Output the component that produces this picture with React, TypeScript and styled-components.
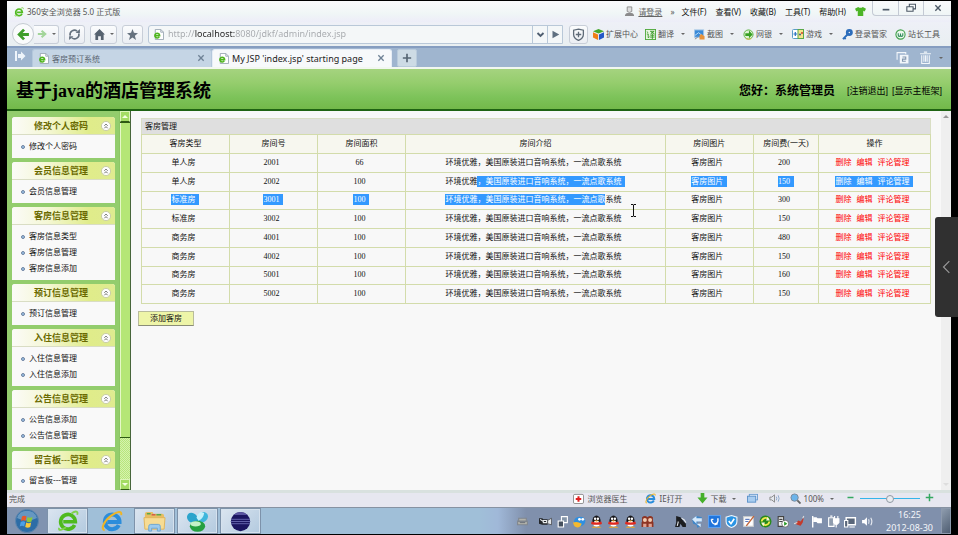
import React from "react";
import styled, { createGlobalStyle, css } from "styled-components";

const ui = `"Noto Sans", "Noto Sans CJK SC", sans-serif`;
const song = `"Liberation Serif", "Noto Sans CJK SC", serif`;

const GlobalStyle = createGlobalStyle`
  * { box-sizing: border-box; }
  body { margin: 0; background: #000; overflow: hidden; }
  button, input { font: inherit; color: inherit; }
  button { padding: 0; border: 0; background: none; }
  a { color: inherit; text-decoration: none; }
  svg { flex: none; }
`;

const Screen = styled.div`
  position: relative;
  display: flex;
  flex-direction: column;
  height: 100vh;
  padding: 1px 7px;
  background: #000;
  font: 8px/12px ${ui};
  white-space: nowrap;
`;

/* ---------- browser chrome ---------- */

const TitleBar = styled.header`
  display: flex;
  align-items: center;
  height: 21px;
  padding-left: 7px;
  background: linear-gradient(#fafafc, #f0f6f6 60%, #ededf8);
  color: #555;
`;
const AppName = styled.span`
  margin-left: 3px;
`;
const Spacer = styled.div`
  flex: 1;
`;
const Login = styled.a`
  margin: 0 8px 0 3px;
  text-decoration: underline;
  color: #666;
`;
const Menu = styled.nav`
  display: flex;
  gap: 9px;
  margin: 0 9px 0 7px;
  color: #111;
`;
const WindowControls = styled.div`
  display: flex;
  align-self: flex-start;
  height: 15px;
  margin-left: 6px;
  border-left: 1px solid #c4cad4;
  border-bottom: 1px solid #c4cad4;
  border-radius: 0 0 0 4px;
`;
const WindowButton = styled.button`
  display: grid;
  place-items: center;
  width: 25px;
  & + & { border-left: 1px solid #c4cad4; }
  &:last-child { width: 28px; }
`;

const Toolbar = styled.div`
  display: flex;
  align-items: center;
  height: 24px;
  padding: 0 11px 0 5px;
  background: linear-gradient(#eef0f7, #e9eff1);
  color: #555;
`;
const BackButton = styled.button`
  display: grid;
  place-items: center;
  width: 22px;
  height: 22px;
  border: 1px solid #c5cbd2;
  border-radius: 50%;
  background: #fafbfc;
`;
const ToolButton = styled.button<{ $width: number; $joined?: boolean }>`
  display: flex;
  align-items: center;
  justify-content: center;
  gap: 5px;
  width: ${(p) => p.$width}px;
  height: 19px;
  margin-right: 5px;
  border: 1px solid #c8ced8;
  border-radius: 3px;
  background: linear-gradient(#fbfcfd, #ebeef3);
  ${(p) => p.$joined && css`border-left: 0; border-radius: 0 3px 3px 0;`}
`;
const AddressBar = styled.div`
  display: flex;
  flex: 1;
  align-items: center;
  height: 19px;
  margin-right: 6px;
  padding-left: 4px;
  border: 1px solid #b9c8d8;
  border-radius: 3px 0 0 3px;
  background: #f4f7f8;
`;
const UrlInput = styled.input`
  flex: 1;
  min-width: 0;
  height: 17px;
  padding: 0 0 1px 4px;
  border: 0;
  outline: 0;
  font-size: 9px;
  color: transparent;
  background: linear-gradient(90deg, #a5a8ac 31px, #222 31px, #222 71px, #a5a8ac 71px);
  background-clip: text;
  -webkit-background-clip: text;
`;
const AddressButton = styled.button`
  display: grid;
  place-items: center;
  width: 15px;
  height: 17px;
  border-left: 1px solid #b9c8d8;
`;
const Extension = styled.button<{ $end?: number }>`
  display: flex;
  align-items: center;
  gap: 2px;
  margin-right: ${(p) => p.$end ?? 9}px;
  white-space: nowrap;
`;
const Caret = styled.i<{ $gap?: number }>`
  margin-left: ${(p) => p.$gap ?? 5}px;
  border: 2px solid transparent;
  border-top-color: #666;
  border-bottom: 0;
`;

const TabStrip = styled.div`
  display: flex;
  align-items: flex-end;
  height: 21px;
  padding-right: 8px;
  border-top: 2px solid #859dc0;
  background: #9fb5cf;
  color: #333;
`;
const TabLead = styled.button`
  align-self: center;
  width: 25px;
`;
const Tab = styled.div<{ $active?: boolean }>`
  display: flex;
  align-items: center;
  width: 180px;
  height: 18px;
  padding: 0 6px 0 5px;
  border: 1px solid ${(p) => (p.$active ? "#e6edf6" : "#b4c8dc")};
  border-bottom: 0;
  border-radius: 3px 3px 0 0;
  background: ${(p) => (p.$active ? "#f7f9fb" : "#c5d5e5")};
  font-size: ${(p) => (p.$active ? 9 : 8)}px;
  color: ${(p) => (p.$active ? "#222" : "#5a6470")};
`;
const TabTitle = styled.button`
  display: flex;
  flex: 1;
  align-items: center;
  gap: 3px;
`;
const NewTab = styled.button`
  display: grid;
  place-items: center;
  width: 20px;
  height: 18px;
  margin-left: 5px;
  border: 1px solid #b9cbdc;
  border-radius: 2px;
  background: #cddbe5;
`;
const TabTools = styled.div`
  display: flex;
  align-self: center;
`;

/* ---------- page ---------- */

const Banner = styled.header`
  display: flex;
  align-items: center;
  height: 44px;
  padding: 3px 9px 0;
  border-top: 2px solid #f2f7f0;
  border-bottom: 2px solid #1f6413;
  background: linear-gradient(#a5d37f, #95cd6d 35%, #7dc35a 70%, #73b94a);
  color: #000;
`;
const SiteTitle = styled.h1`
  flex: 1;
  margin: 0;
  font: bold 18px/24px ${song};
`;
const Greeting = styled.strong`
  margin-right: 12px;
  font: bold 12px/16px ${song};
`;
const BannerLinks = styled.nav`
  display: flex;
  gap: 4px;
  font-family: "Liberation Sans", "Noto Sans CJK SC", sans-serif;
  font-size: 9px;
`;

const Page = styled.div`
  display: flex;
  flex: 1;
  min-height: 0;
  background: #f8f8f8;
  font-family: ${song};
  color: #111;
`;
const Sidebar = styled.aside`
  display: flex;
  flex-direction: column;
  gap: 4px;
  width: 112px;
  overflow: hidden;
  padding: 6px 4px 0 5px;
  background: #93cd6d;
`;
const Panel = styled.section`
  flex: none;
  border-radius: 3px 3px 0 0;
  background: #f9f9f9;
`;
const PanelHeader = styled.h2`
  display: flex;
  align-items: center;
  height: 18px;
  margin: 0;
  padding: 0 4px 0 22px;
  border-bottom: 1px solid #d9ddc4;
  border-radius: 3px 3px 0 0;
  background: linear-gradient(90deg, #fbfbf8, #f4f7d4 35%, #e0ec8a 75%, #dfeb90);
  font: bold 9px/16px ${song};
  color: #6a6a00;
`;
const Collapse = styled.button`
  display: flex;
  margin-left: auto;
`;
const PanelList = styled.ul`
  margin: 0;
  padding: 4px 0 3px 9px;
  list-style: none;
`;
const PanelItem = styled.li`
  display: flex;
  align-items: center;
  gap: 4px;
  height: 16px;
  &::before {
    content: "";
    width: 2px;
    height: 2px;
    border: 1px solid #6f82a0;
    border-radius: 2px;
    background: #9cc3ea;
  }
`;
const SideScroll = styled.div`
  display: flex;
  flex-direction: column;
  width: 12px;
  border-left: 1px solid #8cc665;
  border-right: 1px solid #47653a;
  background: repeating-conic-gradient(#b8e67c 0 25%, #d6f2ae 0 50%) 0 0 / 2px 2px;
`;
const SideArrow = styled.button`
  display: grid;
  place-items: center;
  height: 11px;
  border: 1px solid #dcf5b8;
  border-bottom-color: #2f5a14;
  background: #a4dc64;
`;
const SideThumb = styled.div`
  flex: 314;
  border: 1px solid #2f5a14;
  border-width: 1px 0;
  background: #b5e676;
  box-shadow: inset 1px 0 #e6f8c8;
`;
const SideTrack = styled.div`
  flex: 41;
`;

const Main = styled.main`
  flex: 1;
  min-width: 0;
  padding: 7px 10px 0;
`;
const RoomTable = styled.table`
  width: 100%;
  height: 170px;
  table-layout: fixed;
  border-collapse: collapse;
  text-align: center;
  line-height: 12px;
`;
const Caption = styled.caption`
  height: 16px;
  padding-left: 3px;
  border: 1px solid #d9dec4;
  border-bottom: 0;
  background: #dfdfdf;
  text-align: left;
  line-height: 16px;
`;
const HeadCell = styled.th<{ $share: number }>`
  width: ${(p) => p.$share}%;
  height: 19px;
  padding: 0;
  border: 1px solid #d3dcab;
  background: #f7f7ef;
  font-weight: normal;
`;
const Cell = styled.td`
  padding: 0 4px 0 0;
  border: 1px solid #d3dcab;
`;
const Selected = styled.span<{ $tail?: boolean }>`
  display: inline-block;
  height: 11px;
  margin-right: ${(p) => (p.$tail ? -4 : 0)}px;
  padding-right: ${(p) => (p.$tail ? 4 : 0)}px;
  background: #3399ff;
  line-height: 11px;
  color: #fff;
`;
const Actions = styled.span<{ $on?: boolean }>`
  display: inline-flex;
  gap: 5px;
  color: ${(p) => (p.$on ? "#fff" : "#f00")};
`;
const AddButton = styled.button`
  width: 56px;
  height: 15px;
  margin: 7px 0 0 -3px;
  border: 1px solid #b9bc9c;
  border-bottom-color: #8a8d78;
  background: #eef5a8;
  line-height: 12px;
`;
const PageScroll = styled.div`
  display: flex;
  flex-direction: column;
  justify-content: space-between;
  align-items: center;
  width: 10px;
  padding: 4px 0;
  background: #efefef;
`;
const Triangle = styled.i<{ $down?: boolean; $color: string }>`
  border: 3px solid transparent;
  ${(p) =>
    p.$down
      ? css`border-top-color: ${p.$color}; border-bottom: 0;`
      : css`border-bottom-color: ${p.$color}; border-top: 0;`}
`;

/* ---------- bottom bars ---------- */

const StatusBar = styled.footer`
  display: flex;
  align-items: center;
  height: 17px;
  padding: 0 17px 3px 2px;
  border-top: 3px solid #d9e1df;
  background: #e7e7f0;
  color: #555;
`;
const StatusItem = styled.button<{ $end: number }>`
  display: flex;
  align-items: center;
  gap: 3px;
  margin-right: ${(p) => p.$end}px;
`;
const ZoomSlider = styled.input`
  appearance: none;
  width: 60px;
  height: 9px;
  margin: 0 5px;
  background: linear-gradient(#35b4ea, #35b4ea) center / 100% 1px no-repeat;
  &::-webkit-slider-thumb {
    appearance: none;
    width: 8px;
    height: 8px;
    border: 1px solid #8f98a3;
    border-radius: 50%;
    background: #e9ecf0;
  }
`;
const Taskbar = styled.footer`
  display: flex;
  align-items: stretch;
  height: 27px;
  border-top: 1px solid #8792a2;
  background: linear-gradient(90deg, #a0bfd8 50%, #a0b8d8 52%, #8090ac 55%);
`;
const TaskButton = styled.button<{ $kind: "start" | "open" | "plain" }>`
  display: grid;
  place-items: center;
  width: ${(p) => (p.$kind === "plain" ? 44 : p.$kind === "start" ? 40 : 41)}px;
  margin-right: ${(p) => (p.$kind === "open" ? 2 : 0)}px;
  border: 1px solid transparent;
  ${(p) => p.$kind === "start" && css`background: #8093b0;`}
  ${(p) =>
    p.$kind === "open" &&
    css`
      border-color: #7d92aa;
      background: linear-gradient(135deg, #dbe5f0, #b3cadf);
      box-shadow: inset 0 0 0 1px #d6e2ee;
    `}
`;
const Tray = styled.div`
  display: flex;
  align-items: center;
  gap: 4px;
  margin-left: auto;
`;
const TrayIcon = styled.button<{ $gap?: number }>`
  display: flex;
  margin-right: ${(p) => p.$gap ?? 0}px;
`;
const Clock = styled.time`
  width: 66px;
  margin-left: 1px;
  padding-left: 3px;
  text-align: center;
  font-size: 9px;
  line-height: 13px;
  color: #f4f6fa;
`;
const ShowDesktop = styled.button`
  width: 10px;
  border: 1px solid #8d9aad;
  background: linear-gradient(135deg, #8e9cae, #4f5e72);
`;

/* ---------- floating items ---------- */

const DrawerHandle = styled.button`
  position: absolute;
  top: 217px;
  right: 0;
  display: grid;
  place-items: center;
  width: 23px;
  height: 100px;
  border-radius: 3px 0 0 3px;
  background: #303030;
`;
const Pointer = styled.svg`
  position: absolute;
  top: 204px;
  left: 630px;
`;

/* ---------- icons ---------- */

type IconProps = { size?: number; box?: string; children: React.ReactNode };
const Icon = ({ size = 11, box = "0 0 12 12", children }: IconProps) => (
  <svg width={size} height={size} viewBox={box} fill="none" aria-hidden="true">
    {children}
  </svg>
);
const Small = ({ children }: { children: React.ReactNode }) => <Icon size={13}>{children}</Icon>;

const GreenE = ({ size }: { size?: number }) => (
  <Icon size={size}>
    <path d="M9.600 8.200A4 4 0 1 1 10 6.400H3.400" stroke="#4fba1f" strokeWidth="2" />
    <path d="M1.200 9.800C.4 11.600 3 10.800 5 9.400M8 1.800C10 .4 11.800.4 11 2.600" stroke="#7fd24c" strokeWidth="1" />
  </Icon>
);
const BlueE = ({ size }: { size?: number }) => (
  <Icon size={size}>
    <path d="M9.700 8.200A4 4 0 1 1 10.100 6.500H3.400" stroke="#2b8ddb" strokeWidth="2.200" />
    <path d="M2 11C-.4 10.600 1.600 6 5.400 3.200 9 .6 11.600.2 11 2.800" stroke="#efb526" strokeWidth="1.100" />
  </Icon>
);
const PageIcon = () => (
  <Icon size={11}>
    <path d="M2.500.5h6l3 3v8h-9z" fill="#fff" stroke="#9aa7b4" />
    <path d="M8.500.5v3h3" stroke="#9aa7b4" />
    <path d="M6.800 8.600A2.600 2.600 0 1 1 7.200 7.200H2.200" stroke="#4fb51e" strokeWidth="1.700" />
  </Icon>
);
const Close = ({ color = "#6f8296" }: { color?: string }) => (
  <Icon size={8}>
    <path d="M2 2l8 8M10 2l-8 8" stroke={color} strokeWidth="2" />
  </Icon>
);
const Penguin = () => (
  <Small>
    <ellipse cx="6" cy="5.500" rx="3.800" ry="5" fill="#17171c" />
    <ellipse cx="6" cy="8" rx="3" ry="2.800" fill="#fff" />
    <path d="M1.500 6q4.500 2 9 0l.5 2.200q-5 1.800-10 0z" fill="#e0281c" />
    <circle cx="4.700" cy="3.400" r="1.100" fill="#fff" />
    <circle cx="7.300" cy="3.400" r="1.100" fill="#fff" />
    <path d="M3.800 5h4.400L6 6.300z" fill="#f5a81c" />
    <path d="M1.500 11.700q2.500-2.200 4.500-.2 2-2 4.500.2z" fill="#f5a81c" />
  </Small>
);

const extensions: { name: string; caret?: boolean; end?: number; icon: React.ReactNode }[] = [
  {
    name: "扩展中心",
    end: 7,
    icon: (
      <Icon>
        <path d="M6 0l6 2.500L6 5 0 2.500z" fill="#45a82c" />
        <path d="M0 3.500L5.500 6v6L0 9.200z" fill="#f07e18" />
        <path d="M12 3.500L6.500 6v6L12 9.200z" fill="#2458c8" />
      </Icon>
    ),
  },
  {
    name: "翻译",
    caret: true,
    icon: (
      <Icon>
        <rect x=".5" y=".5" width="11" height="11" fill="#e8f5e0" stroke="#4ea83a" />
        <path d="M2 3l1.500 1M2 5.500h1.500v4L5 8.500M5.500 2.500h4.500L6 5.500M6.500 3l4 2.500M8 5v6M5.800 6.800h4.500M5.500 8.800h5" stroke="#3b9a2a" />
      </Icon>
    ),
  },
  {
    name: "截图",
    caret: true,
    icon: (
      <Icon>
        <rect x=".5" y="1" width="10" height="8" fill="#3a8ad8" stroke="#a6c6e6" />
        <path d="M1 7l4-3 5 4" stroke="#bfe0fa" />
        <path d="M6 11.500V7l2-1.500L11.500 8v3.500z" fill="#e8923a" />
        <path d="M1 11l3-2" stroke="#888" />
      </Icon>
    ),
  },
  {
    name: "网银",
    caret: true,
    icon: (
      <Icon>
        <circle cx="6" cy="6" r="5" fill="#dff2d4" stroke="#58b13c" strokeWidth="1" />
        <path d="M2.500 4.500h4v-3L10.500 6l-4 4V7.500h-4z" fill="#37a022" />
        <path d="M3 10.500q3 1.500 6 0" stroke="#d8b83a" />
      </Icon>
    ),
  },
  {
    name: "游戏",
    caret: true,
    end: 9,
    icon: (
      <Icon size={12}>
        <rect x=".5" y="1.500" width="11" height="9" rx="1" fill="#fff" stroke="#5a9cc8" />
        <rect x="6" y="1.500" width="5.500" height="9" fill="#f7e48a" stroke="#5aa84a" />
        <path d="M3.300 4v4M1.500 6h3.600" stroke="#2a70c0" strokeWidth="1.200" />
        <circle cx="8" cy="6.500" r="1" fill="#3a5a8a" />
        <circle cx="10" cy="5" r="1" fill="#d0402a" />
      </Icon>
    ),
  },
  {
    name: "登录管家",
    end: 8,
    icon: (
      <Icon>
        <circle cx="8" cy="3.800" r="2.300" stroke="#2c6dbb" strokeWidth="3" />
        <path d="M6 6L1 11M2.500 9.500L4 11" stroke="#2c6dbb" strokeWidth="2" />
      </Icon>
    ),
  },
  {
    name: "站长工具",
    end: 0,
    icon: (
      <Icon>
        <circle cx="6" cy="6" r="5" stroke="#42a24c" strokeWidth="1.200" fill="#eef8ee" />
        <path d="M3.500 4.500v2q0 1.500 1.200 1.500T6 6.500V5v1.500Q6 8 7.300 8t1.200-1.500v-2" stroke="#2c8a5a" strokeWidth="1.200" />
      </Icon>
    ),
  },
];

const trayIcons: { name: string; gap?: number; icon: React.ReactNode }[] = [
  { name: "键盘", gap: 6, icon: <Small><path d="M2.500 3h7v3h-7zM1.500 5.500h9V9h-9z" fill="#b2b2aa" stroke="#80868e" /><path d="M3.500 7h5" stroke="#70767e" /></Small> },
  { name: "录像", icon: <Small><path d="M0 3h3l1 1h4v5H3L0 8z" fill="#23262a" /><path d="M8 5l3.500-2v6L8 8z" fill="#e9ecef" stroke="#333" strokeWidth=".6" /><path d="M1 4l3 2M4 5h3v2H4z" stroke="#e6e9ea" /></Small> },
  { name: "窗口", icon: <Small><path d="M5 1.500h5.500V7H5z" fill="#8595a8" stroke="#fff" /><path d="M2 5.500h5V11H2z" fill="#45505e" stroke="#fff" /></Small> },
  { name: "旺旺", icon: <Small><path d="M1 6q0-4 5-4.500 5 0 5.500 4Q11 10 6 10.500 1 10 1 6z" fill="#2f8fe0" /><circle cx="6" cy="4" r="1.300" fill="#fff" /><circle cx="9" cy="4" r="1.300" fill="#fff" /><path d="M0 7q4-1.500 8 1-1 3.500-4 3.500T0 7z" fill="#f6b92e" /></Small> },
  { name: "QQ 1", icon: <Penguin /> },
  { name: "QQ 2", icon: <Penguin /> },
  { name: "QQ 3", icon: <Penguin /> },
  { name: "好友", gap: 16, icon: <Small><path d="M.5 11V7L1 6V2q2.500-2 5 0 2.500-2 5 0v4l.5 1v4z" fill="#8d3424" /><circle cx="3.600" cy="4.600" r="1.800" fill="#f4ccb0" /><circle cx="8.400" cy="4.600" r="1.800" fill="#f4ccb0" /><path d="M2 8h3v3H2zM7 8h3v3H7z" fill="#e0a090" /></Small> },
  { name: "工具", icon: <Small><path d="M2 1l4 1 3 4 2 2v3H8L6 8l-1 3H1l1-4z" fill="#1b1d20" /><path d="M7 3q3 1 4 4M4 6l-1 4" stroke="#e8eaec" /></Small> },
  { name: "同步", icon: <Small><path d="M1 4l4-3 5 1v4H6v2l4 1-4 3-1-3-3-1z" fill="#3f86c8" /><path d="M1 4l4-3v2h5v3H5v2zM5 8h4v3z" fill="#d6e9fb" /></Small> },
  { name: "迅雷", icon: <Small><rect x=".5" y=".5" width="11" height="11" fill="#1f74dc" stroke="#5c9fee" /><path d="M3 4q1 5 4 4t2-5M3 4h2M6 9l3-1" stroke="#fff" strokeWidth="1.300" /></Small> },
  { name: "安全卫士", icon: <Small><path d="M6 .5l5 1.500v4q0 4-5 5.500Q1 10 1 6V2z" fill="#2a94e4" stroke="#eef6fd" /><path d="M3.500 5.500l2 2.500 3-4.500" stroke="#fff" strokeWidth="1.500" /></Small> },
  { name: "便笺", icon: <Small><path d="M1.500 1.500h9v9h-9z" fill="#fff" stroke="#c5c8cc" /><path d="M4 10l7-9" stroke="#c0643a" strokeWidth="1.300" /><path d="M3 4h4M3 6h3" stroke="#5d7cc0" /></Small> },
  { name: "更新", icon: <Small><circle cx="6" cy="6" r="5.500" fill="#278a1c" /><path d="M2.500 6A3.500 3.500 0 0 1 9 4.500M9.500 6A3.500 3.500 0 0 1 3 7.500" stroke="#f3e94c" strokeWidth="1.600" /><path d="M8 1.500l2 3.500H6.500zM4 10.500L2 7h3.500z" fill="#f4f4d8" /></Small> },
  { name: "任务", icon: <Small><path d="M2 1.500h5v9H2z" fill="#eef0f0" stroke="#444" /><path d="M3 4h3M3 6h3" stroke="#444" /><circle cx="8.500" cy="8" r="3.200" fill="#fff" stroke="#444" strokeWidth=".6" /><path d="M7.500 6l3 2-3 2z" fill="#2b9a28" /></Small> },
  { name: "输入法", icon: <Small><path d="M2 8l3-3 2 1 3-4-1 5-2 3-3-1z" fill="#c33a2c" /><path d="M1 8l3-1M9 3l1-2" stroke="#ddd" /></Small> },
  { name: "操作中心", icon: <Small><path d="M2.500 1v10.500" stroke="#fff" strokeWidth="1.300" /><path d="M3 2h3l1 1h4v4.500H7L6 6.500H3z" fill="#fff" /></Small> },
  { name: "电源", icon: <Small><path d="M1.500 2.500h5v8h-5zM3 1h2" fill="#8f9cae" stroke="#fff" /><path d="M6 3.500h5V7L9.500 8.500h-2L6 7zM7 1v2M10 1v2M8.500 8v3.500" fill="#fff" stroke="#fff" /></Small> },
  { name: "网络", icon: <Small><path d="M2 2.500h8.500V9H2z" fill="#59667a" stroke="#fff" strokeWidth="1.300" /><path d="M.5 5h3v6h-3zM5 11h5" fill="#59667a" stroke="#fff" /></Small> },
  { name: "音量", icon: <Small><path d="M1 4.500h2L5.500 2v8L3 7.500H1z" fill="#fff" /><path d="M7 4q1 2 0 4M9 2.500q2 3.500 0 7" stroke="#e8ecf2" /></Small> },
];

/* ---------- data ---------- */

const menus = ["文件(F)", "查看(V)", "收藏(B)", "工具(T)", "帮助(H)"];
const panels: [string, string[]][] = [
  ["修改个人密码", ["修改个人密码"]],
  ["会员信息管理", ["会员信息管理"]],
  ["客房信息管理", ["客房信息类型", "客房信息管理", "客房信息添加"]],
  ["预订信息管理", ["预订信息管理"]],
  ["入住信息管理", ["入住信息管理", "入住信息添加"]],
  ["公告信息管理", ["公告信息添加", "公告信息管理"]],
  ["留言板---管理", ["留言板---管理"]],
];
const columns: [string, number][] = [
  ["客房类型", 11.15],
  ["房间号", 11.15],
  ["房间面积", 11.15],
  ["房间介绍", 32.95],
  ["房间图片", 11.15],
  ["房间费(一天)", 8.25],
  ["操作", 14.2],
];
const intro = "环境优雅，美国原装进口音响系统，一流点歌系统";

/* `from`/`to` mark the selected part of the introduction; `on` lists wholly selected columns */
type Room = { type: string; id: string; area: string; fee: string; from?: number; to?: number; on?: string };
const rooms: Room[] = [
  { type: "单人房", id: "2001", area: "66", fee: "200" },
  { type: "单人房", id: "2002", area: "100", fee: "150", from: 4, to: 22, on: "picture fee actions" },
  { type: "标准房", id: "3001", area: "100", fee: "300", from: 0, to: 20, on: "type id area" },
  { type: "标准房", id: "3002", area: "100", fee: "150" },
  { type: "商务房", id: "4001", area: "100", fee: "480" },
  { type: "商务房", id: "4002", area: "100", fee: "150" },
  { type: "商务房", id: "5001", area: "100", fee: "160" },
  { type: "商务房", id: "5002", area: "100", fee: "150" },
];

const RoomRow = ({ room }: { room: Room }) => {
  const on = (key: string) => (room.on ?? "").split(" ").includes(key);
  const mark = (key: string, node: React.ReactNode) => (on(key) ? <Selected $tail>{node}</Selected> : node);
  const { from = 0, to = 0 } = room;
  return (
    <tr>
      <Cell>{mark("type", room.type)}</Cell>
      <Cell>{mark("id", room.id)}</Cell>
      <Cell>{mark("area", room.area)}</Cell>
      <Cell>
        {intro.slice(0, from)}
        {to > 0 && <Selected $tail={to === 22}>{intro.slice(from, to)}</Selected>}
        {intro.slice(to)}
      </Cell>
      <Cell>{mark("picture", "客房图片")}</Cell>
      <Cell>{mark("fee", room.fee)}</Cell>
      <Cell>
        {mark(
          "actions",
          <Actions $on={on("actions")}>
            <a href="#delete">删除</a>
            <a href="#edit">编辑</a>
            <a href="#comments">评论管理</a>
          </Actions>
        )}
      </Cell>
    </tr>
  );
};

export default function App() {
  return (
    <Screen lang="zh-CN">
      <GlobalStyle />
      <TitleBar>
        <GreenE size={10} />
        <AppName>360安全浏览器 5.0 正式版</AppName>
        <Spacer />
        <Icon>
          <path d="M3.500 1h5v5q-2.500 2-5 0z" fill="#ddd" stroke="#8b8b8b" />
          <path d="M1 11q0-3 3-3.500h4q3 .5 3 3.500z" fill="#8b8b8b" />
        </Icon>
        <Login href="#login">请登录</Login>
        <span>»</span>
        <Menu>
          {menus.map((m) => (
            <a href="#menu" key={m}>{m}</a>
          ))}
        </Menu>
        <Icon>
          <path d="M0 3l3.500-2q2.500 2 5 0L12 3l-1.500 3L9 5.300V11H3V5.300L1.500 6z" fill="#4cb526" />
        </Icon>
        <WindowControls>
          <WindowButton aria-label="最小化">
            <Icon size={10}><path d="M2 8h8" stroke="#4c5866" strokeWidth="2" /></Icon>
          </WindowButton>
          <WindowButton aria-label="还原">
            <Icon size={10}><path d="M4 4V1.500h7.500V7H9M1 4.500h7.500V10H1z" stroke="#4c5866" strokeWidth="1.300" /></Icon>
          </WindowButton>
          <WindowButton aria-label="关闭"><Close color="#4c5866" /></WindowButton>
        </WindowControls>
      </TitleBar>

      <Toolbar>
        <BackButton aria-label="后退">
          <Icon size={13}><path d="M11 6H2.500M6.500 1.500L2 6l4.500 4.500" stroke="#3f9e2b" strokeWidth="2.600" /></Icon>
        </BackButton>
        <ToolButton $width={25} $joined aria-label="前进">
          <Icon size={10}><path d="M1 6h8M5.500 2L10 6l-4.500 4" stroke="#a3d59a" strokeWidth="2.400" /></Icon>
          <Caret $gap={0} />
        </ToolButton>
        <ToolButton $width={21} aria-label="刷新">
          <Icon size={13}>
            <path d="M2 7A4 4 0 0 1 8.500 3M10 5A4 4 0 0 1 3.500 9" stroke="#66727f" strokeWidth="1.500" />
            <path d="M7 4.500h4V1zM5 7.500H1V11z" fill="#66727f" />
          </Icon>
        </ToolButton>
        <ToolButton $width={27} aria-label="主页">
          <Icon><path d="M6 0l6 6h-1.500v6H7.500V8h-3v4h-3V6H0z" fill="#56626f" /></Icon>
          <Caret $gap={0} />
        </ToolButton>
        <ToolButton $width={21} aria-label="收藏">
          <Icon><path d="M6 0l1.600 4.200L12 4.500 8.600 7.300 9.800 12 6 9.300 2.200 12l1.200-4.700L0 4.500l4.400-.3z" fill="#66727f" /></Icon>
        </ToolButton>
        <AddressBar>
          <PageIcon />
          <UrlInput aria-label="地址" defaultValue="http://localhost:8080/jdkf/admin/index.jsp" />
          <AddressButton aria-label="历史">
            <Icon size={9}><path d="M2 4l4 4 4-4" stroke="#4f5e70" strokeWidth="2.500" /></Icon>
          </AddressButton>
          <AddressButton aria-label="转到">
            <Icon size={9}><path d="M2 1l9 5-9 5z" fill="#5f6f80" /></Icon>
          </AddressButton>
        </AddressBar>
        <ToolButton $width={19} aria-label="安全">
          <Icon size={13}>
            <path d="M6 1l4.500 1v4q0 3.500-4.500 5.500Q1.500 9.500 1.500 6V2z" stroke="#5f6b78" strokeWidth="1.200" />
            <path d="M6 3.500v5M3.500 6h5" stroke="#5f6b78" strokeWidth="1.200" />
          </Icon>
        </ToolButton>
        {extensions.map((e) => (
          <Extension key={e.name} $end={e.end}>
            {e.icon}
            {e.name}
            {e.caret && <Caret />}
          </Extension>
        ))}
      </Toolbar>

      <TabStrip>
        <TabLead aria-label="侧栏">
          <Icon size={12}><path d="M1 1h2v10H1zM4 4h3V1.500L11.500 6 7 10.500V8H4z" fill="#eef4fa" /></Icon>
        </TabLead>
        <Tab>
          <TabTitle><PageIcon />客房预订系统</TabTitle>
          <button aria-label="关闭标签"><Close /></button>
        </Tab>
        <Tab $active>
          <TabTitle><PageIcon />My JSP 'index.jsp' starting page</TabTitle>
          <button aria-label="关闭标签"><Close /></button>
        </Tab>
        <NewTab aria-label="新标签">
          <Icon size={10}><path d="M6 1v10M1 6h10" stroke="#566573" strokeWidth="2" /></Icon>
        </NewTab>
        <Spacer />
        <TabTools>
          <Extension $end={10} aria-label="标签列表">
            <Icon size={13}>
              <path d="M1 8V1.500h8V3" stroke="#f2f6fa" />
              <rect x="3.500" y="3.500" width="8" height="8" fill="#f2f6fa" />
              <path d="M6 5.500h3v2H6v2h3" stroke="#8296ae" />
            </Icon>
          </Extension>
          <Extension $end={0} aria-label="恢复">
            <Icon size={13}><path d="M1 2.500h10M4.500 1h3M2.500 4v7.500h7V4M4.500 4v6M6 4v6M7.500 4v6" stroke="#f2f6fa" /></Icon>
            <Caret />
          </Extension>
        </TabTools>
      </TabStrip>

      <Banner>
        <SiteTitle>基于java的酒店管理系统</SiteTitle>
        <Greeting>您好：系统管理员</Greeting>
        <BannerLinks>
          <a href="#logout">[注销退出]</a>
          <a href="#frame">[显示主框架]</a>
        </BannerLinks>
      </Banner>

      <Page>
        <Sidebar>
          {panels.map(([title, items]) => (
            <Panel key={title}>
              <PanelHeader>
                {title}
                <Collapse aria-label="折叠">
                  <Icon size={10}>
                    <circle cx="6" cy="6" r="5.500" fill="#fdfdfd" stroke="#c3c7a4" />
                    <path d="M4 5.700l2-2 2 2M4 8.700l2-2 2 2" stroke="#555" />
                  </Icon>
                </Collapse>
              </PanelHeader>
              <PanelList>
                {items.map((item) => (
                  <PanelItem key={item}><a href="#item">{item}</a></PanelItem>
                ))}
              </PanelList>
            </Panel>
          ))}
        </Sidebar>
        <SideScroll>
          <SideArrow aria-label="向上"><Triangle $color="#f4ffe2" /></SideArrow>
          <SideThumb />
          <SideTrack />
          <SideArrow aria-label="向下"><Triangle $down $color="#f4ffe2" /></SideArrow>
        </SideScroll>
        <Main>
          <RoomTable>
            <Caption>客房管理</Caption>
            <thead>
              <tr>
                {columns.map(([name, share]) => (
                  <HeadCell key={name} $share={share}>{name}</HeadCell>
                ))}
              </tr>
            </thead>
            <tbody>
              {rooms.map((room) => (
                <RoomRow key={room.id} room={room} />
              ))}
            </tbody>
          </RoomTable>
          <AddButton>添加客房</AddButton>
        </Main>
        <PageScroll>
          <Triangle $color="#999" />
          <Triangle $down $color="#ddd" />
        </PageScroll>
      </Page>

      <StatusBar>
        <span>完成</span>
        <Spacer />
        <StatusItem $end={18}>
          <Icon>
            <rect x=".5" y="1.500" width="11" height="10" rx="1.500" fill="#fff" stroke="#888" />
            <path d="M6 3.500v6M3 6.500h6" stroke="#e02020" strokeWidth="2.200" />
          </Icon>
          浏览器医生
        </StatusItem>
        <StatusItem $end={14}><BlueE size={11} />IE打开</StatusItem>
        <StatusItem $end={11}>
          <Icon><path d="M4 0h4v5h3.500L6 11.500.5 5H4z" fill="#45b02a" /></Icon>
          下载
          <Caret $gap={2} />
        </StatusItem>
        <StatusItem $end={11} aria-label="窗口">
          <Icon><rect x="2.500" y="1.500" width="9" height="6" fill="#dceafa" stroke="#6d9fd0" /><rect x=".5" y="3.500" width="9" height="6.500" fill="#a9cdf0" stroke="#5b90c8" /></Icon>
        </StatusItem>
        <StatusItem $end={10} aria-label="声音">
          <Icon><path d="M1 4.500h2L6 2v8L3 7.500H1z" fill="#e6e9ee" stroke="#888" /><path d="M8 4q1 2 0 4M10 2.500q2 3.500 0 7" stroke="#8aa6c8" /></Icon>
        </StatusItem>
        <StatusItem $end={12}>
          <Icon><circle cx="5" cy="5" r="4" fill="#6cb4ea" stroke="#7b8896" /><path d="M8 8l3.500 3.500" stroke="#666" strokeWidth="2" /></Icon>
          100%
          <Caret $gap={3} />
        </StatusItem>
        <button aria-label="缩小"><Icon size={9}><path d="M2 6h8" stroke="#35a860" strokeWidth="2" /></Icon></button>
        <ZoomSlider type="range" aria-label="缩放" defaultValue={50} />
        <button aria-label="放大"><Icon size={9}><path d="M6 1v10M1 6h10" stroke="#35a860" strokeWidth="2" /></Icon></button>
      </StatusBar>

      <Taskbar>
        <TaskButton $kind="start" aria-label="开始">
          <Icon size={24} box="0 0 24 24">
            <circle cx="12" cy="12" r="11.500" fill="#2d6da6" stroke="#5e86ae" />
            <path d="M2 9a10.500 10.500 0 0 1 20 0q-10 5-20 0z" fill="#7fa9cd" opacity=".7" />
            <path d="M7 7.500q2.500-1.500 4.500 0L10.500 12q-2-1.500-4.500 0z" fill="#e8592a" />
            <path d="M12.500 8q2.500 1.500 5 0l-1 4.500q-2.500 1.500-5 0z" fill="#8cc83c" />
            <path d="M5.700 13q2.500-1.500 4.500 0l-1 4.500q-2-1.500-4.500 0z" fill="#4aa0e8" />
            <path d="M11.200 13.500q2.500 1.500 5 0l-1 4.500q-2.500 1.500-5 0z" fill="#f8c83a" />
          </Icon>
        </TaskButton>
        <TaskButton $kind="open" aria-label="360安全浏览器"><GreenE size={22} /></TaskButton>
        <TaskButton $kind="plain" aria-label="Internet Explorer"><BlueE size={22} /></TaskButton>
        <TaskButton $kind="open" aria-label="资源管理器">
          <Icon size={23} box="0 0 24 24">
            <path d="M2 4q0-2 2-2h6l1 2h9q2 0 2 2v13H2z" fill="#e8bd62" />
            <path d="M4 4h4M14 5h5" stroke="#5aa84a" strokeWidth="1.500" />
            <path d="M9 5h4" stroke="#d05848" strokeWidth="1.500" />
            <path d="M1 8h22l-1 12H2z" fill="#f6dc94" stroke="#e0b55c" />
            <path d="M6 22v-5q0-2 2-2h8q2 0 2 2v5h-3v-3H9v3z" fill="#9ccbee" stroke="#6ba5d2" />
          </Icon>
        </TaskButton>
        <TaskButton $kind="open" aria-label="消息">
          <Icon size={23} box="0 0 24 24">
            <path d="M1 7q1-5 6-4 4 1 5 5l1 3-4 3-4-1Q1 11 1 7z" fill="#2ba4cc" />
            <path d="M13 8q1-6 6-6 4 1 4 5-1 5-6 6l-4-1z" fill="#3eb6dc" />
            <path d="M11 8q1-5 5-6l3 1q-1 6-6 8z" fill="#c5f0fa" />
            <ellipse cx="12" cy="17" rx="8" ry="5.800" fill="#25a040" />
            <ellipse cx="10" cy="14.500" rx="5.500" ry="2.800" fill="#c5f2c8" />
          </Icon>
        </TaskButton>
        <TaskButton $kind="open" aria-label="Eclipse">
          <Icon size={21} box="0 0 24 24">
            <circle cx="12" cy="12" r="11" fill="#1b1560" />
            <path d="M4 4.500a11 11 0 0 1 16 0z" fill="#5a55a0" />
            <path d="M1.500 9.500h21M1 12h22M1.500 14.500h21" stroke="#6c6cb4" />
          </Icon>
        </TaskButton>
        <Tray>
          {trayIcons.map((t) => (
            <TrayIcon key={t.name} $gap={t.gap} aria-label={t.name}>{t.icon}</TrayIcon>
          ))}
        </Tray>
        <Clock dateTime="2012-08-30T16:25">16:25<br />2012-08-30</Clock>
        <ShowDesktop aria-label="显示桌面" />
      </Taskbar>

      <Pointer width="7" height="13" viewBox="0 0 7 13" fill="none" aria-hidden="true">
        <path d="M1 .5h2l.5.5.5-.5h2M3.500 1v11M1 12.500h2l.5-.5.5.5h2" stroke="#111" />
      </Pointer>
      <DrawerHandle aria-label="展开">
        <Icon size={14}><path d="M8 1L3 6l5 5" stroke="#999" /></Icon>
      </DrawerHandle>
    </Screen>
  );
}
